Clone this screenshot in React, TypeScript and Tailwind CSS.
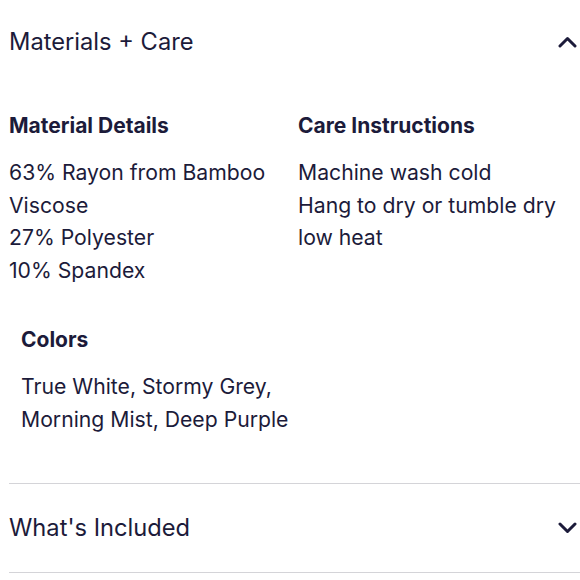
import React from "react";

function Chevron({ up }: { up?: boolean }) {
  return (
    <svg width="19" height="12" viewBox="0 0 19 12" fill="none">
      <path
        d={up ? "M2 10 L9.5 2.5 L17 10" : "M2 2 L9.5 9.5 L17 2"}
        stroke="#1c1b3a"
        strokeWidth="3"
        strokeLinecap="round"
        strokeLinejoin="round"
      />
    </svg>
  );
}

export default function App() {
  return (
    <div
      className="w-[580px] h-[580px] bg-white text-[#1c1b3a] overflow-hidden"
      style={{ fontFamily: "Inter, 'Noto Sans', sans-serif" }}
    >
      <div className="pl-[9px]">
        <div className="h-[84px] flex items-center justify-between pr-[3px]">
          <span className="text-[23.7px] leading-none">Materials + Care</span>
          <Chevron up />
        </div>
        <div className="grid grid-cols-[289px_1fr] mt-[28px]">
          <div>
            <div className="text-[21px] font-bold leading-[28px]">Material Details</div>
            <div className="mt-[16px] text-[21.2px] leading-[32.5px]">
              <div>63% Rayon from Bamboo</div>
              <div>Viscose</div>
              <div>27% Polyester</div>
              <div>10% Spandex</div>
            </div>
          </div>
          <div>
            <div className="text-[21px] font-bold leading-[28px]">Care Instructions</div>
            <div className="mt-[16px] text-[21.2px] leading-[32.5px]">
              <div>Machine wash cold</div>
              <div>Hang to dry or tumble dry</div>
              <div>low heat</div>
            </div>
          </div>
        </div>
        <div className="pl-[12px] mt-[40px]">
          <div className="text-[21px] font-bold leading-[28px]">Colors</div>
          <div className="mt-[16px] text-[21.2px] leading-[32.5px]">
            <div>True White, Stormy Grey,</div>
            <div>Morning Mist, Deep Purple</div>
          </div>
        </div>
        <div className="mt-[48px] border-t border-[#d4d4d8]">
          <div className="h-[88px] flex items-center justify-between pr-[3px]">
            <span className="text-[23.7px] leading-none">What's Included</span>
            <Chevron />
          </div>
        </div>
        <div className="border-t border-[#d4d4d8]" />
      </div>
    </div>
  );
}
